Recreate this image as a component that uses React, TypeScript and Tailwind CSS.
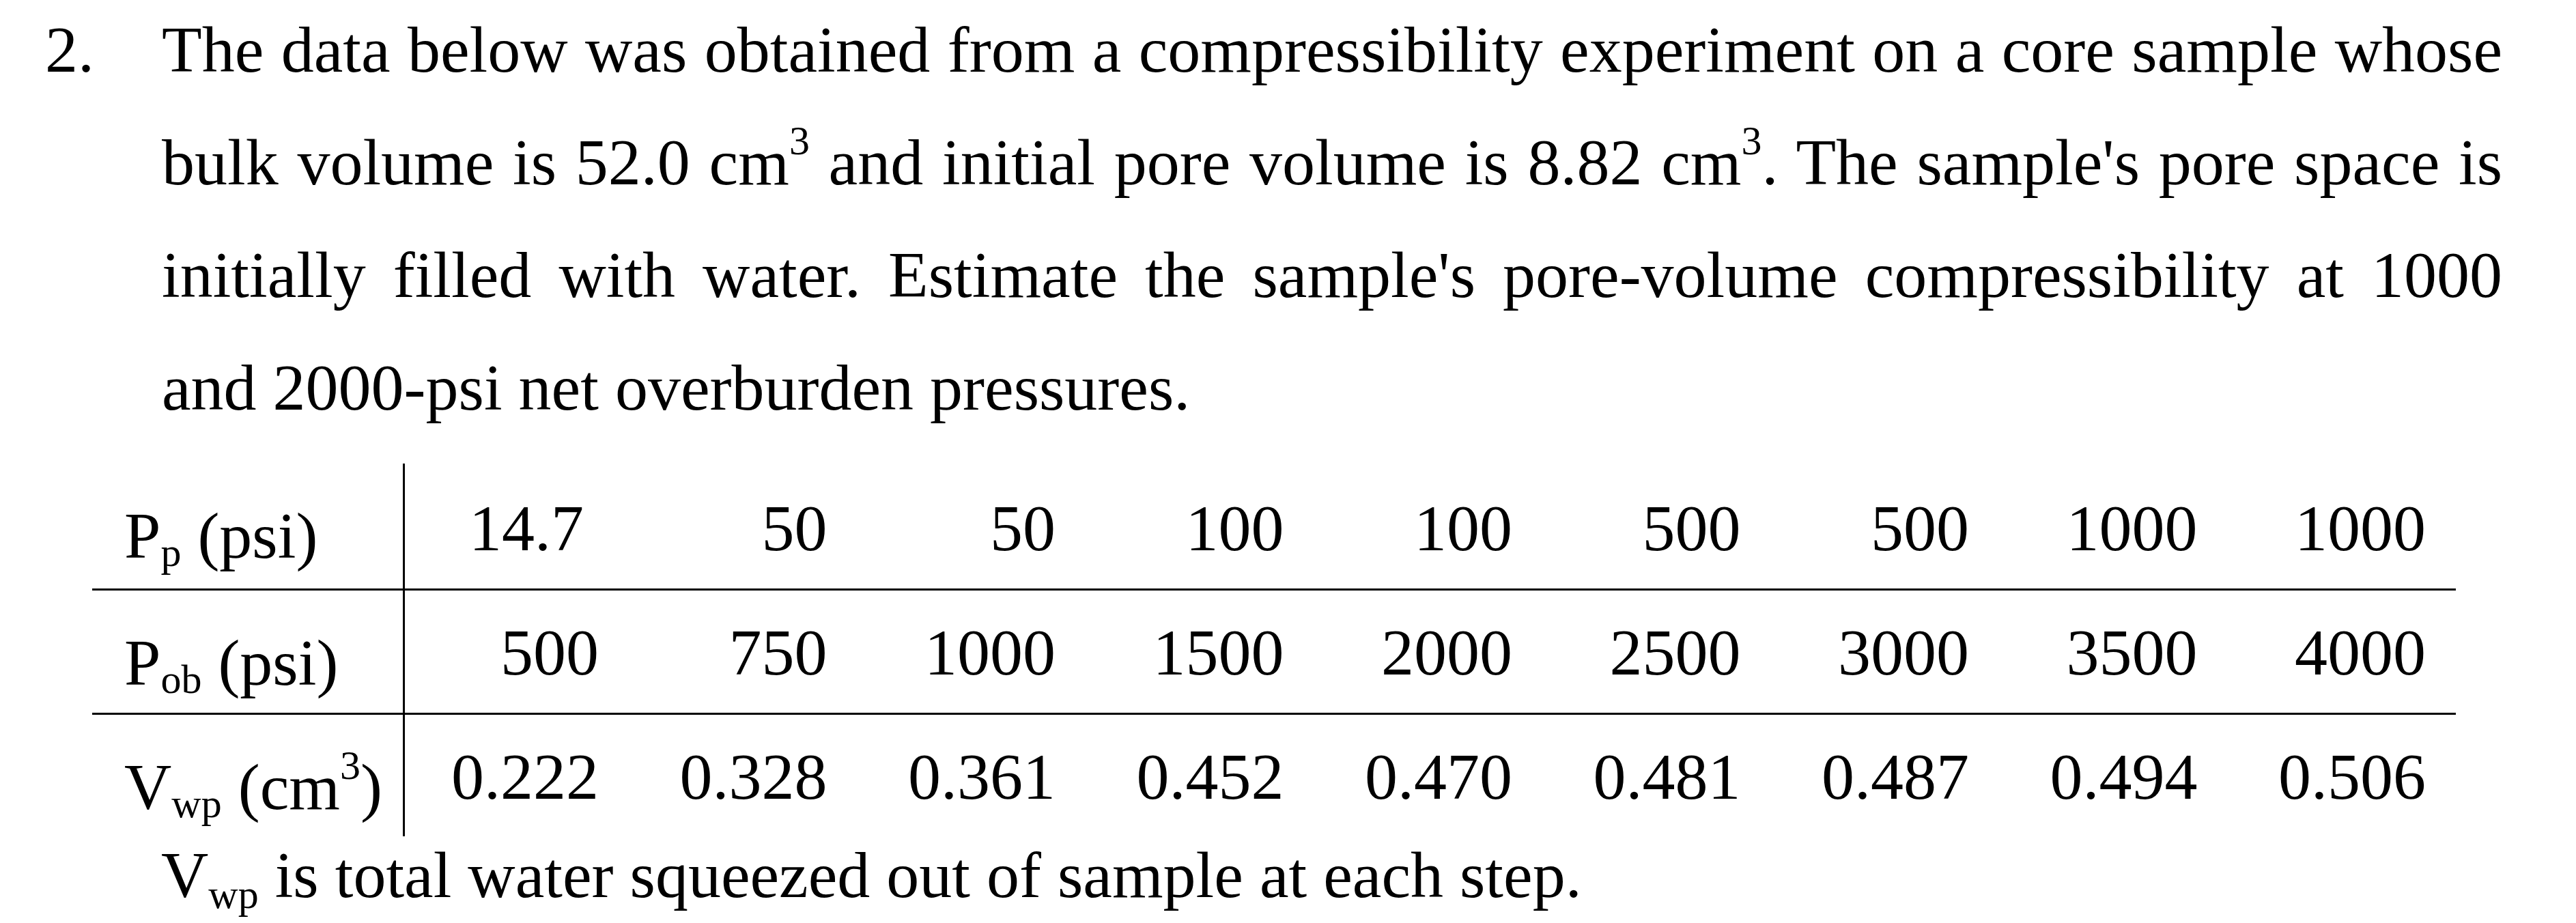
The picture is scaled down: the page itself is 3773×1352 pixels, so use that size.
import React from "react";

// --- Helpers ---
const Sup: React.FC<{ children: React.ReactNode }> = ({ children }) => (
  <sup className="text-[60px] top-[-44px]">{children}</sup>
);

const Sub: React.FC<{ children: React.ReactNode; low?: boolean }> = ({
  children,
  low,
}) => (
  <sub className={`text-[60px] ${low ? "top-[16px]" : "top-[12px]"}`}>
    {children}
  </sub>
);

interface Row {
  label: React.ReactNode;
  values: string[];
  rowClass: string;
  numPad: string;
}

const rows: Row[] = [
  {
    label: (
      <>
        P<Sub>p</Sub> (psi)
      </>
    ),
    values: ["14.7", "50", "50", "100", "100", "500", "500", "1000", "1000"],
    rowClass: "h-[186px] border-b-[3px]",
    numPad: "pt-[47px]",
  },
  {
    label: (
      <>
        P<Sub>ob</Sub> (psi)
      </>
    ),
    values: ["500", "750", "1000", "1500", "2000", "2500", "3000", "3500", "4000"],
    rowClass: "h-[182px] border-b-[3px]",
    numPad: "pt-[43px]",
  },
  {
    label: (
      <>
        V<Sub>wp</Sub> (cm<Sup>3</Sup>)
      </>
    ),
    values: ["0.222", "0.328", "0.361", "0.452", "0.470", "0.481", "0.487", "0.494", "0.506"],
    rowClass: "h-[178px]",
    numPad: "pt-[43px]",
  },
];

const lineJustify = "text-justify [text-align-last:justify]";

export default function App() {
  return (
    <div className="w-[3773px] h-[1352px] overflow-hidden bg-white text-black font-['Liberation_Serif','Times_New_Roman',serif] text-[96px]">
      {/* Question text */}
      <div className="flex mt-[-10px] pl-[66px] leading-[165px]">
        <div className="w-[171px]">2.</div>
        <div className="w-[3428px]">
          <div className={lineJustify}>
            The data below was obtained from a compressibility experiment on a
            core sample whose
          </div>
          <div className={lineJustify}>
            bulk volume is 52.0 cm<Sup>3</Sup> and initial pore volume is 8.82
            cm<Sup>3</Sup>. The sample's pore space is
          </div>
          <div className={lineJustify}>
            initially filled with water. Estimate the sample's pore-volume
            compressibility at 1000
          </div>
          <div>and 2000-psi net overburden pressures.</div>
        </div>
      </div>

      {/* Data table */}
      <div className="mt-[29px] ml-[135px] w-[3462px]">
        {rows.map((row, i) => (
          <div
            key={i}
            className={`grid grid-cols-[458px_328px_repeat(8,334.5px)] border-black ${row.rowClass}`}
          >
            <div className="border-r-[3px] border-black pl-[47px] pt-[58px] leading-none whitespace-nowrap">
              {row.label}
            </div>
            {row.values.map((v, j) => (
              <div
                key={j}
                className={`text-right leading-none ${row.numPad} ${
                  i === 0 && j === 0 ? "pr-[66px]" : "pr-[44px]"
                }`}
              >
                {v}
              </div>
            ))}
          </div>
        ))}
      </div>

      {/* Footnote */}
      <div className="mt-[9px] pl-[236px] leading-none">
        V<Sub low>wp</Sub> is total water squeezed out of sample at each step.
      </div>
    </div>
  );
}
